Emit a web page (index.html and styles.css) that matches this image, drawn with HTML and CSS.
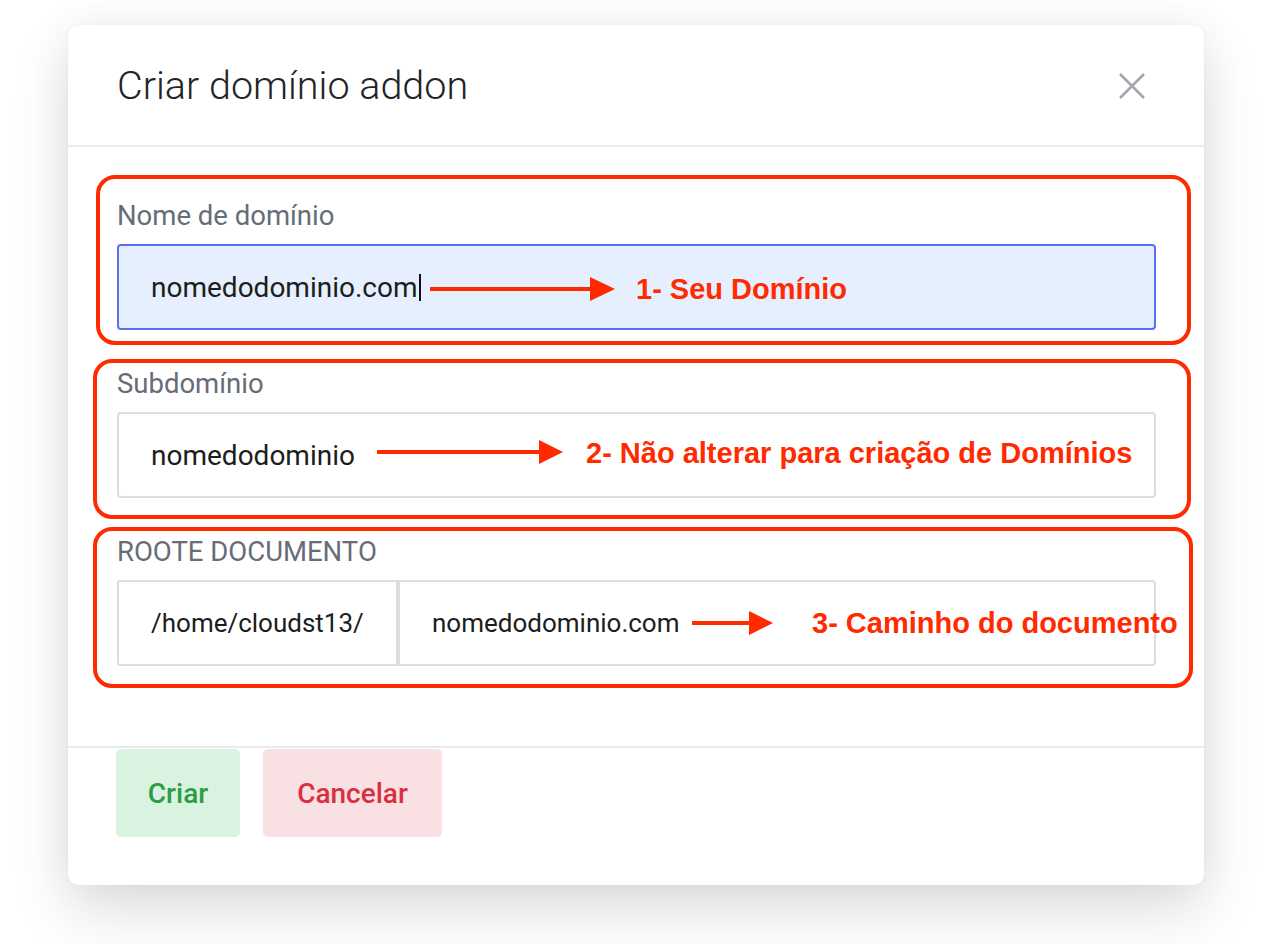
FILE: index.html
```html
<!DOCTYPE html>
<html lang="pt">
<head>
<meta charset="utf-8">
<title>Criar domínio addon</title>
<link rel="stylesheet" href="styles.css">
</head>
<body>
<div class="page">
  <div class="modal">
    <div class="modal-header">
      <h1 class="modal-title">Criar domínio addon</h1>
      <button class="close" aria-label="Fechar">
        <svg width="28" height="28" viewBox="0 0 28 28"><path d="M2 2 L26 26 M26 2 L2 26" stroke="#a3a6ad" stroke-width="2.6" fill="none"/></svg>
      </button>
    </div>
    <div class="modal-body">
      <div class="field">
        <label class="label">Nome de domínio</label>
        <div class="input focus"><span>nomedodominio.com</span><span class="caret"></span></div>
      </div>
      <div class="field">
        <label class="label">Subdomínio</label>
        <div class="input"><span>nomedodominio</span></div>
      </div>
      <div class="field">
        <label class="label">ROOTE DOCUMENTO</label>
        <div class="group">
          <div class="addon">/home/cloudst13/</div>
          <div class="input grow"><span>nomedodominio.com</span></div>
        </div>
      </div>
    </div>
    <div class="modal-footer">
      <button class="btn btn-ok">Criar</button>
      <button class="btn btn-cancel">Cancelar</button>
    </div>

    <div class="mark box1"></div>
    <div class="mark box2"></div>
    <div class="mark box3"></div>

    <svg class="arrow a1" width="185" height="26" viewBox="0 0 185 26"><line x1="0" y1="13" x2="162" y2="13" stroke="#ff2a00" stroke-width="4"/><polygon points="160,1 185,13 160,25" fill="#ff2a00"/></svg>
    <svg class="arrow a2" width="186" height="26" viewBox="0 0 186 26"><line x1="0" y1="13" x2="164" y2="13" stroke="#ff2a00" stroke-width="4"/><polygon points="162,1 186,13 162,25" fill="#ff2a00"/></svg>
    <svg class="arrow a3" width="81" height="26" viewBox="0 0 81 26"><line x1="0" y1="13" x2="59" y2="13" stroke="#ff2a00" stroke-width="4"/><polygon points="57,1 81,13 57,25" fill="#ff2a00"/></svg>

    <div class="note n1">1- Seu Domínio</div>
    <div class="note n2">2- Não alterar para criação de Domínios</div>
    <div class="note n3">3- Caminho do documento</div>
  </div>
</div>
</body>
</html>
```

FILE: styles.css
```css
* { box-sizing: border-box; }
html, body { margin: 0; padding: 0; background: #ffffff; }
body { font-family: Roboto, "Liberation Sans", sans-serif; width: 1266px; height: 944px; overflow: hidden; }

.page { padding: 25px 62px 0 68px; }

.modal {
  position: relative;
  width: 1136px;
  height: 860px;
  background: #fff;
  border-radius: 10px;
  box-shadow: 0 0 1px rgba(0,0,0,0.12), 0 0 40px rgba(0,0,0,0.06), 0 28px 60px rgba(0,0,0,0.12);
}

.modal-header {
  height: 122px;
  border-bottom: 2px solid #e9eaec;
  display: flex;
  align-items: center;
  justify-content: space-between;
  padding: 0 58px 0 49px;
}
.modal-title {
  margin: 0;
  font-weight: 300;
  font-size: 39.5px;
  color: #212529;
}
.close {
  border: 0;
  background: none;
  padding: 0;
  width: 28px;
  height: 28px;
  display: flex;
  margin-top: 2px;
}

.modal-body {
  padding: 54px 48px 0 49px;
  height: 601px;
  border-bottom: 2px solid #e9eaec;
}
.field { display: flex; flex-direction: column; }
.field + .field { margin-top: 39px; }
.label {
  font-size: 27.5px;
  line-height: 30px;
  color: #676d77;
  margin-bottom: 13px;
}
.input {
  height: 86px;
  border: 2px solid #dcdde2;
  border-radius: 4px;
  background: #fff;
  display: flex;
  align-items: center;
  padding-left: 32px;
  font-size: 28px;
  color: #1b1d20;
}
.input.focus {
  background: #e6effd;
  border-color: #5c6ff2;
}
.caret {
  display: inline-block;
  width: 2px;
  height: 27px;
  background: #111;
  margin-left: 1px;
}
.group { display: flex; }
.addon {
  width: 281px;
  height: 86px;
  border: 2px solid #dcdde2;
  border-radius: 3px 0 0 3px;
  display: flex;
  align-items: center;
  padding-left: 32px;
  font-size: 26px;
  color: #1b1d20;
}
.grow { flex: 1; border-radius: 0 4px 4px 0; font-size: 26px; }

.modal-footer {
  display: flex;
  gap: 23px;
  padding: 1px 0 0 48px;
}
.btn {
  height: 88px;
  border: 0;
  border-radius: 5px;
  font-family: Roboto, "Liberation Sans", sans-serif;
  font-weight: 500;
  font-size: 28px;
  padding: 0;
}
.btn-ok { width: 124px; background: #daf3e0; color: #2a9d45; }
.btn-cancel { width: 179px; background: #f9e0e2; color: #d9303f; }

.mark {
  position: absolute;
  border: 4px solid #ff2a00;
  border-radius: 19px;
  pointer-events: none;
}
.box1 { left: 28px; top: 150px; width: 1095px; height: 170px; }
.box2 { left: 25px; top: 334px; width: 1098px; height: 160px; }
.box3 { left: 25px; top: 502px; width: 1100px; height: 161px; }

.arrow { position: absolute; }
.a1 { left: 362px; top: 251px; }
.a2 { left: 309px; top: 414px; }
.a3 { left: 624px; top: 585px; }

.note {
  position: absolute;
  font-family: "Liberation Sans", Arial, sans-serif;
  font-weight: 700;
  font-size: 29px;
  line-height: 32px;
  color: #ff2a00;
  white-space: nowrap;
}
.n1 { left: 568px; top: 248px; }
.n2 { left: 518px; top: 412px; }
.n3 { left: 744px; top: 582px; }
```
